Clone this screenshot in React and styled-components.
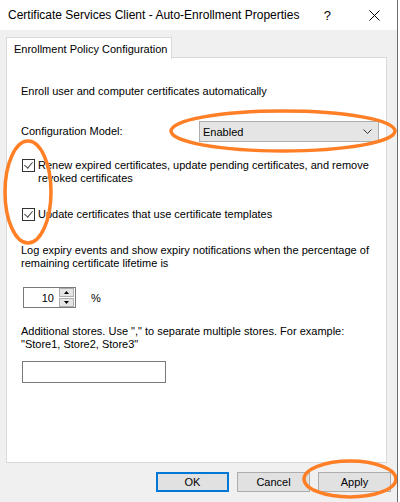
import styled, { createGlobalStyle } from "styled-components";

const GlobalStyle = createGlobalStyle`
  html, body {
    margin: 0;
    padding: 0;
    background: #ffffff;
  }
  body {
    font-family: "Liberation Sans", Arial, sans-serif;
    font-size: 11px;
    color: #000;
  }
`;

export default function App() {
  return (
    <>
      <GlobalStyle />
      <Window>
        <TitleBar>
          <Title>Certificate Services Client - Auto-Enrollment Properties</Title>
          <HelpMark>?</HelpMark>
          <CloseMark>
            <svg width="11" height="11" viewBox="0 0 11 11">
              <path d="M0.5 0.5 L10.5 10.5 M10.5 0.5 L0.5 10.5" stroke="#000" strokeWidth="1" fill="none" />
            </svg>
          </CloseMark>
        </TitleBar>

        <Body>
          <TabStrip>
            <Tab>Enrollment Policy Configuration</Tab>
          </TabStrip>

          <Panel>
            <Label>Enroll user and computer certificates automatically</Label>

            <ConfigRow>
              <Label>Configuration Model:</Label>
              <Dropdown>
                <span>Enabled</span>
                <svg width="9" height="5" viewBox="0 0 9 5">
                  <path d="M0.5 0.5 L4.5 4.5 L8.5 0.5" stroke="#333" strokeWidth="1" fill="none" />
                </svg>
              </Dropdown>
            </ConfigRow>

            <CheckRow $top={17}>
              <CheckBox />
              <CheckText>
                Renew expired certificates, update pending certificates, and remove revoked certificates
              </CheckText>
            </CheckRow>

            <CheckRow $top={23}>
              <CheckBox />
              <CheckText>Update certificates that use certificate templates</CheckText>
            </CheckRow>

            <Paragraph $top={23}>
              Log expiry events and show expiry notifications when the percentage of remaining certificate lifetime is
            </Paragraph>

            <SpinRow>
              <SpinBox>
                <SpinValue>10</SpinValue>
                <SpinButtons>
                  <SpinButton>
                    <svg width="5" height="3" viewBox="0 0 5 3"><path d="M0 3 L2.5 0 L5 3 Z" fill="#000" /></svg>
                  </SpinButton>
                  <SpinButton>
                    <svg width="5" height="3" viewBox="0 0 5 3"><path d="M0 0 L2.5 3 L5 0 Z" fill="#000" /></svg>
                  </SpinButton>
                </SpinButtons>
              </SpinBox>
              <Percent>%</Percent>
            </SpinRow>

            <Paragraph $top={17}>
              Additional stores. Use "," to separate multiple stores. For example: "Store1, Store2, Store3"
            </Paragraph>

            <TextInput />
          </Panel>

          <ButtonRow>
            <Button $default>OK</Button>
            <Button>Cancel</Button>
            <Button>Apply</Button>
          </ButtonRow>
        </Body>

        <Annotations width="400" height="502" viewBox="0 0 400 502">
          <ellipse cx="283" cy="131" rx="112" ry="20" />
          <ellipse cx="28" cy="192" rx="23" ry="51" />
          <ellipse cx="350" cy="479" rx="46" ry="18" />
        </Annotations>
      </Window>
    </>
  );
}

// STYLES

const Window = styled.div`
  position: relative;
  width: 397px;
  height: 502px;
  background: #f0f0f0;
  border-right: 1px solid #6d6d6d;
  display: flex;
  flex-direction: column;
  overflow: hidden;
`;

const TitleBar = styled.div`
  height: 30px;
  background: #ffffff;
  display: flex;
  align-items: center;
  padding-left: 8px;
  flex-shrink: 0;
`;

const Title = styled.div`
  font-size: 12px;
  white-space: nowrap;
`;

const HelpMark = styled.div`
  margin-left: auto;
  font-size: 13px;
  margin-right: 38px;
`;

const CloseMark = styled.div`
  width: 11px;
  height: 11px;
  margin-right: 17px;
  display: flex;
`;

const Body = styled.div`
  flex: 1;
  padding: 7px 6px 0 6px;
  display: flex;
  flex-direction: column;
`;

const TabStrip = styled.div`
  display: flex;
  height: 20px;
`;

const Tab = styled.div`
  background: #ffffff;
  border: 1px solid #d9d9d9;
  border-bottom: none;
  padding: 0 6px 0 7px;
  width: 151px;
  white-space: nowrap;
  display: flex;
  align-items: center;
  position: relative;
  z-index: 1;
  height: 21px;
`;

const Panel = styled.div`
  width: 381px;
  height: 406px;
  box-sizing: border-box;
  background: #ffffff;
  border: 1px solid #d9d9d9;
  padding: 27px 7px 0 14px;
  display: flex;
  flex-direction: column;
  align-items: flex-start;
`;

const Label = styled.div`
  line-height: 13px;
  white-space: nowrap;
`;

const ConfigRow = styled.div`
  margin-top: 23px;
  width: 100%;
  display: flex;
  align-items: center;
  justify-content: space-between;
`;

const Dropdown = styled.div`
  width: 180px;
  height: 21px;
  box-sizing: border-box;
  background: #e5e5e5;
  border: 1px solid #adadad;
  display: flex;
  align-items: center;
  justify-content: space-between;
  padding: 0 6px 0 3px;
`;

const CheckRow = styled.div`
  margin-top: ${(p) => p.$top}px;
  display: flex;
  align-items: flex-start;
  gap: 3px;
  padding-left: 1px;
`;

const CheckBox = styled.div`
  width: 13px;
  height: 13px;
  box-sizing: border-box;
  border: 1px solid #333333;
  background: #ffffff;
  flex-shrink: 0;
  position: relative;
  &::after {
    content: "";
    position: absolute;
    left: 3px;
    top: 0px;
    width: 4px;
    height: 7px;
    border-right: 1.5px solid #4a4a4a;
    border-bottom: 1.5px solid #4a4a4a;
    transform: rotate(40deg);
  }
`;

const CheckText = styled.div`
  line-height: 13px;
  width: 335px;
`;

const Paragraph = styled.div`
  margin-top: ${(p) => p.$top}px;
  line-height: 13px;
  width: 352px;
`;

const SpinRow = styled.div`
  margin-top: 17px;
  padding-left: 2px;
  display: flex;
  align-items: center;
`;

const SpinBox = styled.div`
  width: 53px;
  height: 21px;
  box-sizing: border-box;
  border: 1px solid #7a7a7a;
  background: #ffffff;
  display: flex;
  align-items: center;
`;

const SpinValue = styled.div`
  flex: 1;
  text-align: right;
  padding-right: 5px;
`;

const SpinButtons = styled.div`
  width: 15px;
  height: 19px;
  display: flex;
  flex-direction: column;
  gap: 1px;
  margin-right: 1px;
`;

const SpinButton = styled.div`
  flex: 1;
  background: #e5e5e5;
  border: 1px solid #adadad;
  display: flex;
  align-items: center;
  justify-content: center;
`;

const Percent = styled.div`
  margin-left: 15px;
`;

const TextInput = styled.div`
  margin-top: 10px;
  margin-left: 1px;
  width: 144px;
  height: 22px;
  box-sizing: border-box;
  border: 1px solid #7a7a7a;
  background: #ffffff;
`;

const ButtonRow = styled.div`
  margin-top: 9px;
  display: flex;
  justify-content: flex-end;
  gap: 8px;
`;

const Button = styled.div`
  width: 73px;
  height: 20px;
  box-sizing: border-box;
  background: #e1e1e1;
  border: ${(p) => (p.$default ? "2px solid #0078d7" : "1px solid #adadad")};
  display: flex;
  align-items: center;
  justify-content: center;
`;

const Annotations = styled.svg`
  position: absolute;
  left: 0;
  top: 0;
  pointer-events: none;
  ellipse {
    fill: none;
    stroke: #ff7f27;
    stroke-width: 3.5;
  }
`;
